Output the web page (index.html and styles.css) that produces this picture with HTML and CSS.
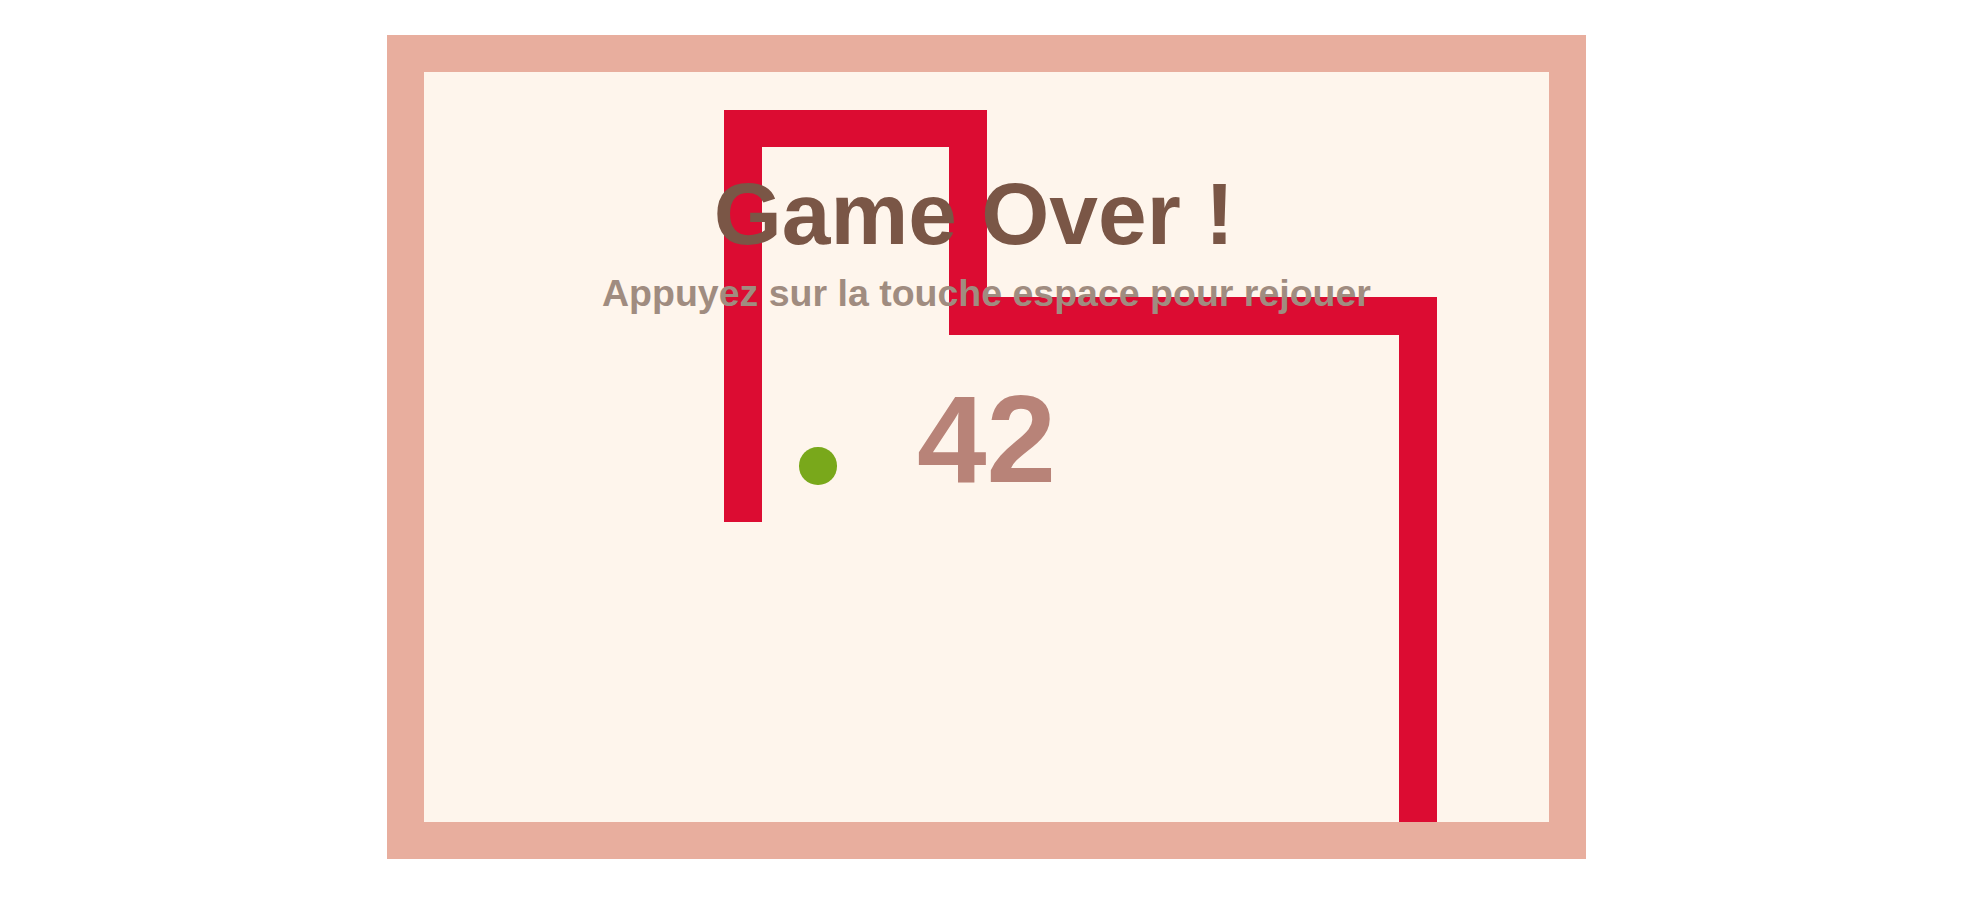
FILE: index.html
```html
<!DOCTYPE html>
<html lang="fr">
<head>
<meta charset="utf-8">
<title>Snake</title>
<link rel="stylesheet" href="styles.css">
</head>
<body>
  <main class="stage">
    <div class="board">
      <div class="grid">
        <div class="seg seg-1"></div>
        <div class="seg seg-2"></div>
        <div class="seg seg-3"></div>
        <div class="seg seg-4"></div>
        <div class="seg seg-5"></div>
        <div class="apple"></div>
      </div>
      <div class="overlay">
        <div class="title">Game Over !</div>
        <div class="hint">Appuyez sur la touche espace pour rejouer</div>
        <div class="score">42</div>
      </div>
    </div>
  </main>
</body>
</html>
```

FILE: styles.css
```css
html, body {
  margin: 0;
  background: #ffffff;
}

.stage {
  padding: 35px 0 0 387px;
}

/* game board: 30 x 20 cells, 37.5px each */
.board {
  position: relative;
  width: 1125px;
  height: 750px;
  border: 37.5px solid #e8ae9e;
  background: #fef5ec;
}

.grid {
  display: grid;
  grid-template-columns: repeat(30, 37.5px);
  grid-template-rows: repeat(20, 37.5px);
  width: 100%;
  height: 100%;
}

.seg {
  background: #dc0c32;
}

.seg-1 { grid-area: 2 / 9 / 13 / 10; }
.seg-2 { grid-area: 2 / 9 / 3 / 16; }
.seg-3 { grid-area: 2 / 15 / 8 / 16; }
.seg-4 { grid-area: 7 / 15 / 8 / 28; }
.seg-5 { grid-area: 7 / 27 / 21 / 28; }

.apple {
  grid-area: 11 / 11 / 12 / 12;
  border-radius: 50%;
  background: #79a81b;
}

/* end-of-game messages drawn over the board */
.overlay {
  position: absolute;
  inset: 0;
  display: flex;
  flex-direction: column;
  align-items: center;
  font-family: "Liberation Sans", Arial, sans-serif;
  font-weight: bold;
  line-height: 1;
  white-space: nowrap;
}

.title {
  margin-top: 99.4px;
  padding-right: 25px;
  font-size: 87.5px;
  color: #7a5646;
}

.hint {
  margin-top: 16px;
  font-size: 37.5px;
  color: #a08c80;
}

.score {
  margin-top: 63.3px;
  font-size: 125px;
  color: #b88378;
}
```
